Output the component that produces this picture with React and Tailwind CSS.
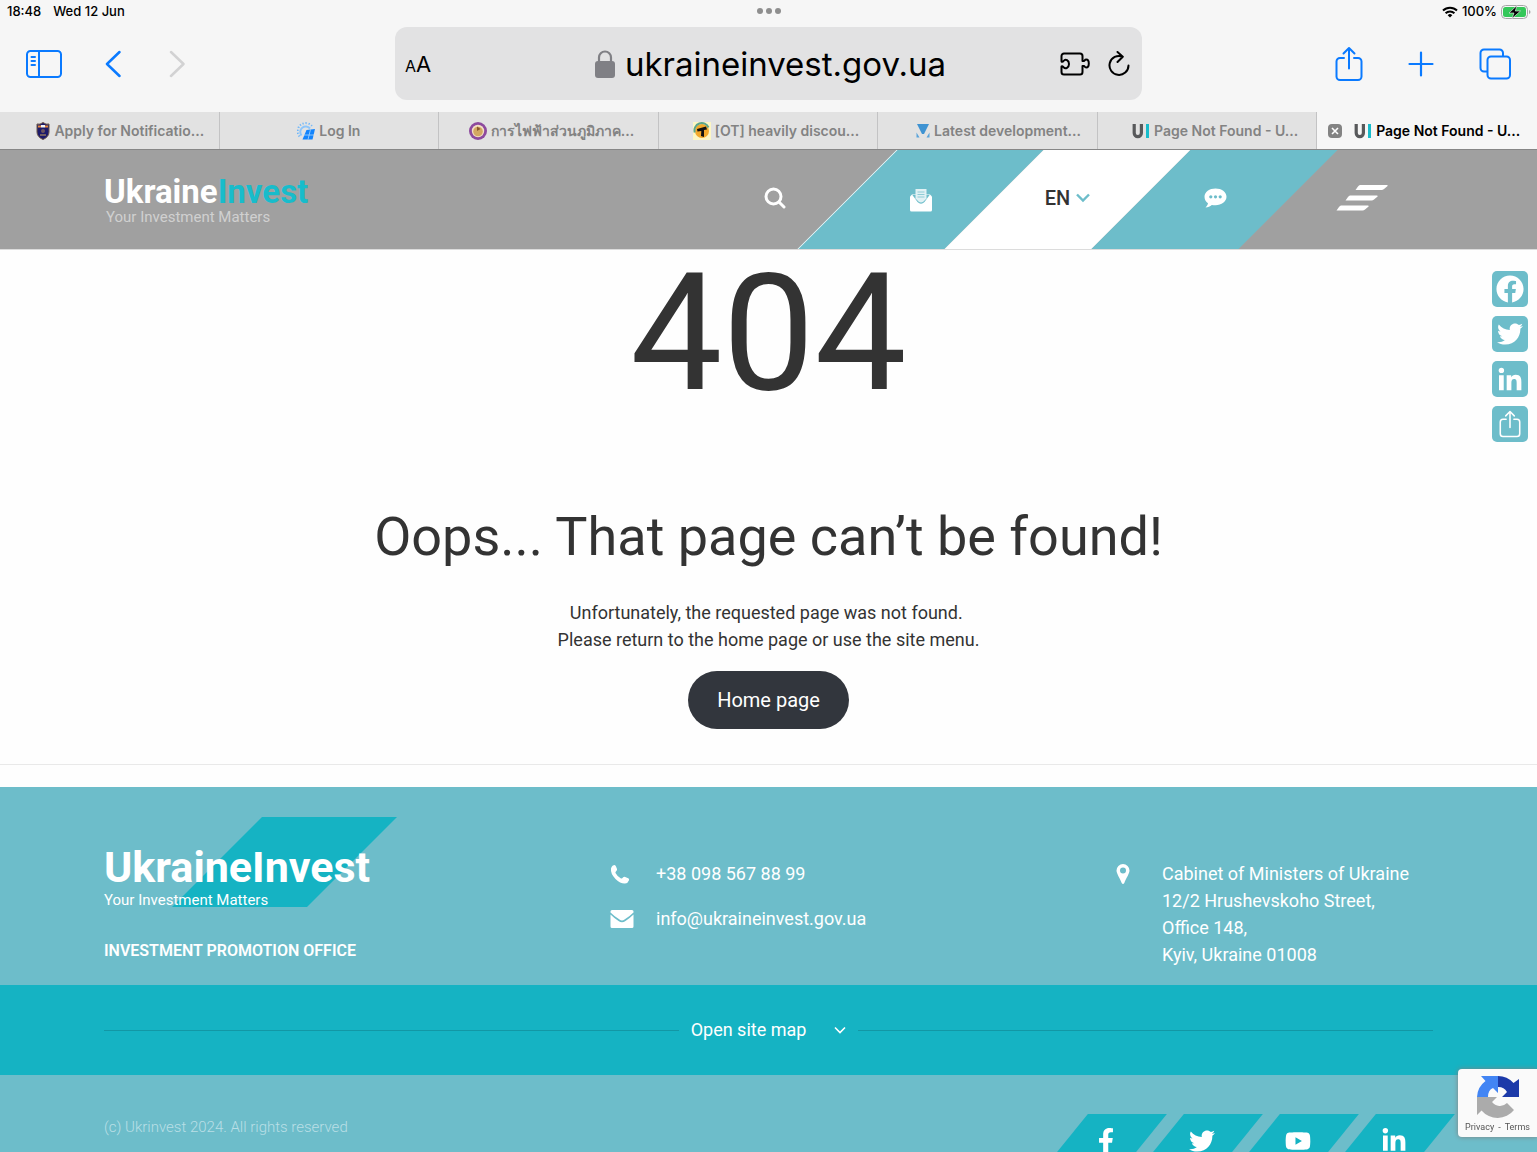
import { FaFacebook, FaFacebookF, FaLinkedinIn, FaTwitter, FaYoutube } from "react-icons/fa";

function ShareIcon({ className }) {
  return (
    <svg viewBox="0 0 28 36" className={className} fill="none" stroke="currentColor" strokeWidth="2" strokeLinecap="round" strokeLinejoin="round">
      <path d="M9 12H5a3.500 3.500 0 0 0-3.500 3.500v15A3.500 3.500 0 0 0 5 34h18a3.500 3.500 0 0 0 3.500-3.500v-15A3.500 3.500 0 0 0 23 12h-4" />
      <path d="M14 22.500V2M8.500 7.500 14 2l5.500 5.500" />
    </svg>
  );
}

function LinkedinMark() {
  return (
    <svg viewBox="0 0 32 32" className="size-9" fill="currentColor">
      <path d="M6.227 12.61h4.190v13.480h-4.190zm2.095-6.700a2.430 2.430 0 0 1 0 4.860c-1.344 0-2.428-1.090-2.428-2.430s1.084-2.430 2.428-2.430m4.720 6.700h4.020v1.840h.058c.56-1.058 1.927-2.176 3.965-2.176 4.238 0 5.020 2.792 5.020 6.420v7.395h-4.183v-6.560c0-1.564-.03-3.574-2.178-3.574-2.180 0-2.514 1.700-2.514 3.460v6.668h-4.187z" />
    </svg>
  );
}

function ShieldIcon() {
  return (
    <svg viewBox="0 0 14 18" className="h-[18px] w-3.5">
      <path d="M1 2Q4 3 7 .5 10 3 13 2v8q0 5-6 7.500Q1 15 1 10Z" fill="#1d1a6b" stroke="#6b5648" strokeWidth="1" />
      <path d="M2 3.500h3v2H2zM9 3.500h3v2H9z" fill="#e98a3c" />
      <path d="M5 3h4v2.500H5z" fill="#f4f4f4" />
      <circle cx="7" cy="9" r="2" fill="#6d5560" />
      <path d="M4 13h6" stroke="#c9a35c" />
    </svg>
  );
}

function SolarIcon() {
  return (
    <svg viewBox="0 0 18 18" className="size-[18px]">
      <path d="M4.500 13.500A5 5 0 0 1 13 6.500" fill="none" stroke="#8cc5fa" strokeWidth="2" />
      <path d="M2.500 14.500A7.500 7.500 0 0 1 15 4" fill="none" stroke="#6db6fa" strokeWidth="2" strokeDasharray="1.200 1.800" />
      <path d="M9.500 8 18 7 15.500 17.500H5.500Z" fill="#1284fd" />
      <path d="m13.500 7.500-2.500 10M7 13h10" stroke="#bfdffb" strokeWidth=".7" />
    </svg>
  );
}

function PeaIcon() {
  return (
    <svg viewBox="0 0 18 18" className="size-[18px]">
      <circle cx="9" cy="9" r="9" fill="#8d4a9e" />
      <circle cx="9" cy="9" r="6.200" fill="#f3dfc4" />
      <circle cx="9" cy="9.500" r="4.800" fill="#d3a862" />
      <path d="m8 4.500 3.500 2.500L8 9Z" fill="#8a5a2c" />
    </svg>
  );
}

function OtIcon() {
  return (
    <svg viewBox="0 0 18 18" className="size-[18px]">
      <path d="M0 0h18v18H0z" fill="#fcf6c4" />
      <circle cx="9" cy="9" r="7" fill="#f3a92c" />
      <path d="M1.800 10.500A7.300 7.300 0 0 1 15.500 5.500" fill="none" stroke="#5ba58c" strokeWidth="2" />
      <path d="m4 7 9-2.500 1 3-3 .5v7l-3-1 .3-5-3.800.5Z" fill="#111" />
    </svg>
  );
}

function VoxIcon() {
  return (
    <svg viewBox="0 0 14 14" className="size-3.5">
      <path d="M1 0h12L8 10H6Z" fill="#3f93d2" />
      <path d="M.5 8.500v5H3.500ZM13.500 8.500v5h-3Z" fill="#5aa3da" />
    </svg>
  );
}

function UiIcon() {
  return (
    <svg viewBox="0 0 18 16" className="h-4 w-[18px]" fill="none">
      <path d="M2.200 1v9a3.600 3.600 0 0 0 7.200 0V1" stroke="#58595b" strokeWidth="3.200" />
      <path d="M15.500 1v14" stroke="#18bccb" strokeWidth="3" />
    </svg>
  );
}

const tabs = [
  { title: "Apply for Notificatio...", Icon: ShieldIcon, pad: "pl-[22px]" },
  { title: "Log In", Icon: SolarIcon, pad: "" },
  { title: "การไฟฟ้าส่วนภูมิภาค...", Icon: PeaIcon, pad: "pl-1.5" },
  { title: "[OT] heavily discou...", Icon: OtIcon, pad: "pl-4" },
  { title: "Latest development...", Icon: VoxIcon, pad: "pl-[22px]" },
  { title: "Page Not Found - U...", Icon: UiIcon, pad: "pl-4" },
];

function StatusBar() {
  return (
    <div className="relative flex h-[22px] items-center justify-between pt-0.5 pr-1.5 pl-[7px] text-[13px] font-medium text-black">
      <div className="flex gap-3">
        <span>18:48</span>
        <span>Wed 12 Jun</span>
      </div>
      <div className="absolute inset-x-0 top-2 flex justify-center gap-[3px]">
        <i className="size-1.5 rounded-full bg-[#8e8e8e]" />
        <i className="size-1.5 rounded-full bg-[#8e8e8e]" />
        <i className="size-1.5 rounded-full bg-[#8e8e8e]" />
      </div>
      <div className="flex items-center gap-1">
        <svg viewBox="0 0 16 12" className="h-3 w-4" fill="none" stroke="#000" strokeWidth="2">
          <path d="M1 4.500a10 10 0 0 1 14 0M3.600 7.300a6.200 6.200 0 0 1 8.800 0" />
          <path d="M8 11.500 5.700 9.200a3.300 3.300 0 0 1 4.600 0Z" fill="#000" stroke="none" />
        </svg>
        <span>100%</span>
        <svg viewBox="0 0 30 14" className="h-3.5 w-[30px]">
          <rect x=".5" y=".5" width="26" height="13" rx="4" fill="none" stroke="#a5a5a5" />
          <rect x="2" y="2" width="23" height="10" rx="2.500" fill="#34c759" />
          <path d="M28 5v4q1.500-.5 1.500-2T28 5Z" fill="#a5a5a5" />
          <path d="M16 .5 8 8h5l-2 5.500L19.500 6h-5.200Z" fill="#000" stroke="#f6f6f6" strokeWidth=".6" />
        </svg>
      </div>
    </div>
  );
}

function Toolbar() {
  return (
    <div className="flex items-center justify-between px-[26px] pt-[5px] pb-3 text-[#0a7aff]">
      <div className="flex flex-1 items-center">
        <button aria-label="Sidebar">
          <svg viewBox="0 0 36 28" className="h-7 w-9" fill="none" stroke="currentColor" strokeWidth="2" strokeLinecap="round">
            <rect x="1" y="1" width="34" height="26" rx="3.500" />
            <path d="M13 1v26M5.500 7h3.500M5.500 11h3.500M5.500 15h3.500" />
          </svg>
        </button>
        <button aria-label="Back" className="ml-[43px]">
          <svg viewBox="0 0 16 28" className="h-7 w-4" fill="none" stroke="currentColor" strokeWidth="2.500" strokeLinecap="round" strokeLinejoin="round">
            <path d="M14.500 2 2 14l12.500 12" />
          </svg>
        </button>
        <button aria-label="Forward" className="ml-12 text-[#d2d2d3]">
          <svg viewBox="0 0 16 28" className="h-7 w-4" fill="none" stroke="currentColor" strokeWidth="2.500" strokeLinecap="round" strokeLinejoin="round">
            <path d="M2 2l12.500 12L2 26" />
          </svg>
        </button>
      </div>

      <div className="relative flex h-[73px] w-[747px] items-center justify-center rounded-xl bg-[#e2e2e3] pl-1 text-black">
        <button aria-label="Text size" className="absolute left-[10px] pt-0.5 text-[22px]">
          <span className="text-base">A</span>A
        </button>
        <svg viewBox="0 0 20 28" className="h-7 w-5">
          <rect y="11" width="20" height="17" rx="3" fill="#808085" />
          <path d="M4 12V7.500a6 6 0 0 1 12 0V12" fill="none" stroke="#808085" strokeWidth="2.200" />
        </svg>
        <span className="ml-2.5 text-[33px] leading-[42px]">ukraineinvest.gov.ua</span>
        <div className="absolute right-3 flex items-center gap-[18px]">
          <button aria-label="Extensions">
            <svg viewBox="0 0 30 24" className="h-6 w-[30px]" fill="none" stroke="#000" strokeWidth="2" strokeLinejoin="round">
              <path d="M1.500 4A2.500 2.500 0 0 1 4 1.500h16A2.500 2.500 0 0 1 22.500 4v5h1.500c.7 0 .6-1.500 2.200-1.500 1.500 0 2.600 1.700 2.600 4s-1.100 4-2.600 4c-1.600 0-1.500-1.500-2.200-1.500h-1.500v6a2.500 2.500 0 0 1-2.500 2.500H4A2.500 2.500 0 0 1 1.500 20v-5c0-1.300 1.300-.9 2 .1 2 2.400 5.500.5 5.500-3.100S5.500 6.500 3.500 9c-.7 1-2 1.300-2 0Z" />
            </svg>
          </button>
          <button aria-label="Reload">
            <svg viewBox="0 0 22 26" className="h-[26px] w-[22px]" fill="none" stroke="#000" strokeWidth="2" strokeLinecap="round" strokeLinejoin="round">
              <path d="M14.500 5.600A9.500 9.500 0 1 0 20.500 14.500M9.500 1l5.300 4.700L9.500 11" />
            </svg>
          </button>
        </div>
      </div>

      <div className="flex flex-1 items-center justify-end">
        <button aria-label="Share">
          <ShareIcon className="h-9 w-7" />
        </button>
        <button aria-label="New tab" className="ml-[45px]">
          <svg viewBox="0 0 26 26" className="size-[26px]" stroke="currentColor" strokeWidth="2.200" strokeLinecap="round">
            <path d="M13 1.500v23M1.500 13h23" />
          </svg>
        </button>
        <button aria-label="Tabs" className="ml-[45px]">
          <svg viewBox="0 0 32 32" className="size-8" fill="none" stroke="currentColor" strokeWidth="2">
            <path d="M8.500 23.500H5A3.500 3.500 0 0 1 1.500 20V5A3.500 3.500 0 0 1 5 1.500h15.500A3.500 3.500 0 0 1 24 5v3.500" />
            <rect x="8.500" y="8.500" width="22.500" height="22" rx="3.500" />
          </svg>
        </button>
      </div>
    </div>
  );
}

function TabBar() {
  return (
    <nav className="grid h-[38px] grid-cols-7 border-b border-[#868686] text-sm font-semibold text-[#838383]">
      {tabs.map(({ title, Icon, pad }) => (
        <button
          key={title}
          className={`flex items-center justify-center gap-1 border-r border-[#c3c3c4] bg-[#e2e2e2] whitespace-nowrap ${pad}`}
        >
          <Icon />
          {title}
        </button>
      ))}
      <div className="flex items-center justify-center gap-1 pr-1.5 whitespace-nowrap text-black">
        <button aria-label="Close tab" className="mr-2 rounded-sm bg-[#838383] text-white">
          <svg viewBox="0 0 14 14" className="size-3.5" stroke="currentColor" strokeWidth="1.600">
            <path d="m4 4 6 6M10 4l-6 6" />
          </svg>
        </button>
        <UiIcon />
        <span>Page Not Found - U...</span>
      </div>
    </nav>
  );
}

function Stripe({ color, label, children }) {
  return (
    <div className="relative h-full w-[147px]">
      <span className={`absolute inset-0 -skew-x-45 ${color}`} />
      <button aria-label={label} className="relative flex h-full w-full items-center justify-center pb-[3px]">
        {children}
      </button>
    </div>
  );
}

function SiteHeader() {
  return (
    <header className="flex h-[100px] items-center justify-between overflow-hidden border-b border-[#dcdcdc] bg-[#a0a0a0] pr-[102px] pl-[104px]">
      <a href="#" className="block pt-0.5">
        <span className="block text-[33px] leading-[33px] font-bold text-white">
          Ukraine<span className="text-[#18bccb]">Invest</span>
        </span>
        <span className="block pl-0.5 text-[15px] leading-[18px] text-[#d0d0d0]">Your Investment Matters</span>
      </a>
      <div className="flex h-full">
        <Stripe color="bg-transparent" label="Search">
          <svg viewBox="0 0 22 22" className="ml-0.5 size-[22px]" fill="none" stroke="#fff" strokeWidth="3" strokeLinecap="round">
            <circle cx="9.500" cy="9.500" r="7.500" />
            <path d="m15 15 5 5" />
          </svg>
        </Stripe>
        <Stripe color="bg-[#6dbdca] border-l border-white" label="Subscribe">
          <svg viewBox="0 0 24 24" className="mt-1 size-6">
            <path d="M1 8.500 3.500 6h17L23 8.500V22q0 1.500-1.500 1.500h-19Q1 23.500 1 22Z" fill="#fff" />
            <path d="M3 6.500h18L15.500 14q-3.500 3.500-7 0Z" fill="#6dbdca" />
            <path d="M6.500 1h11v9.500l-3 3q-2.500 2-5 0l-3-3Z" fill="#e0f1f4" />
            <path d="M8.500 4h7M8.500 6.500h7M8.500 9h7" stroke="#8fccd6" strokeWidth="1" />
          </svg>
        </Stripe>
        <Stripe color="bg-white" label="Language">
          <span className="text-xl font-medium text-[#333]">EN</span>
          <svg viewBox="0 0 14 10" className="ml-1.5 h-2.5 w-3.5" fill="none" stroke="#6dbdca" strokeWidth="2.400">
            <path d="m1 1.500 6 6 6-6" />
          </svg>
        </Stripe>
        <Stripe color="bg-[#6dbdca]" label="Chat">
          <svg viewBox="0 0 24 20" className="h-5 w-6">
            <path d="M12.500.5C6.500.5 1.500 4 1.500 8.800c0 2.700 1.300 5 3.500 6.500-.3 1.700-1.200 3-2.500 4.200 2.400-.1 4.600-1 6.300-2.500 1.200.2 2.400.3 3.700.3 6 0 11-3.700 11-8.500S18.500.5 12.500.5Z" fill="#fff" />
            <circle cx="7.800" cy="8.800" r="1.600" fill="#6dbdca" />
            <circle cx="12.500" cy="8.800" r="1.600" fill="#6dbdca" />
            <circle cx="17.200" cy="8.800" r="1.600" fill="#6dbdca" />
          </svg>
        </Stripe>
        <Stripe color="bg-transparent" label="Menu">
          <svg viewBox="0 0 52 26" className="h-[26px] w-[52px]" fill="#fff">
            <path d="M24 0h27q1.500 0 0 1.500L48 4q-1 1-2.500 1H19.500L22 1.500Q23 0 24 0ZM14 10.500h27q1.500 0 0 1.500l-3 2.500q-1 1-2.500 1H9.500L12 12q1-1.500 2-1.500ZM5 20.500h27q1.500 0 0 1.500l-3 2.500q-1 1-2.500 1H.5L3 22q1-1.500 2-1.500Z" />
          </svg>
        </Stripe>
      </div>
    </header>
  );
}

function ShareRail() {
  const box = "flex size-9 items-center justify-center rounded-[5px] bg-[#6dbdca] text-white";
  return (
    <div className="fixed top-[271px] right-[9px] flex flex-col gap-[9px]">
      <a href="#" aria-label="Facebook" className={box}><FaFacebook className="size-7" /></a>
      <a href="#" aria-label="Twitter" className={box}><FaTwitter className="size-[26px]" /></a>
      <a href="#" aria-label="LinkedIn" className={box}><LinkedinMark /></a>
      <a href="#" aria-label="Share" className={box}><ShareIcon className="h-7 w-[22px]" /></a>
    </div>
  );
}

const socials = [
  { label: "Facebook", Icon: FaFacebookF },
  { label: "Twitter", Icon: FaTwitter },
  { label: "YouTube", Icon: FaYoutube },
  { label: "LinkedIn", Icon: FaLinkedinIn },
];

function Footer() {
  return (
    <footer className="bg-[#6dbdca] text-white">
      <div className="grid grid-cols-3 gap-[189px] px-[104px] pt-[59px] pb-[17px]">
        <div className="relative">
          <span className="absolute -top-[29px] left-[113px] h-[90px] w-[135px] -skew-x-45 bg-[#15b3c3]" />
          <div className="relative whitespace-nowrap">
            <p className="text-[43px] leading-[43px] font-bold">UkraineInvest</p>
            <p className="mt-0.5 text-[15px] leading-[18px]">Your Investment Matters</p>
            <p className="mt-[33px] text-base leading-[18px] font-semibold">INVESTMENT PROMOTION OFFICE</p>
          </div>
        </div>

        <div className="flex flex-col gap-[18px] pt-3.5 text-lg leading-[27px]">
          <a href="#" className="flex items-center">
            <svg viewBox="0 0 24 20" className="h-5 w-6" fill="#fff">
              <path d="M1 4.500C1.500 2 3.500 1 4.500 1q1 0 1.500 1.500l1 2.500q.3 1-.5 1.800-1.500 1.200-1 2.200 1.800 3.500 5.500 5.500 1 .3 2.200-1.200.8-.9 2-.4l3 1.300q1.300.7.8 2-1 3-4 3.300-4.500.3-9.500-4.500Q.300 9.500 1 4.500Z" />
            </svg>
            <span className="ml-[22px]">+38 098 567 88 99</span>
          </a>
          <a href="#" className="flex items-center">
            <svg viewBox="0 0 24 18" className="h-[18px] w-6" fill="#fff">
              <path d="M2 0h20q1.500 0 1.500 1.500v1Q20 6 14.500 9.500q-2.500 2-5 0Q4 6 .5 2.500v-1Q.5 0 2 0Z" />
              <path d="M.5 4.500Q4 8 8.500 11q3.500 2.500 7 0Q20 8 23.500 4.500v12Q23.500 18 22 18H2Q.5 18 .5 16.500Z" />
            </svg>
            <span className="ml-[22px]">info@ukraineinvest.gov.ua</span>
          </a>
        </div>

        <div className="flex pt-3.5 text-lg leading-[27px] whitespace-nowrap">
          <svg viewBox="0 0 14 20" className="mt-1 h-5 w-3.5" fill="#fff">
            <path fillRule="evenodd" d="M7 0a6.500 6.500 0 0 1 6.500 6.500c0 3-3.500 8-5.200 12.500q-1.300 2-2.600 0C4 14.500.5 9.500.5 6.500A6.500 6.500 0 0 1 7 0Zm0 3.500a3 3 0 1 0 0 6 3 3 0 0 0 0-6Z" />
          </svg>
          <address className="ml-8 not-italic">
            Cabinet of Ministers of Ukraine
            <br />
            12/2 Hrushevskoho Street,
            <br />
            Office 148,
            <br />
            Kyiv, Ukraine 01008
          </address>
        </div>
      </div>

      <div className="flex h-[90px] items-center gap-3 bg-[#15b3c3] px-[104px]">
        <span className="h-px flex-1 bg-[#1297a5]" />
        <button className="flex items-center text-lg">
          Open site map
          <svg viewBox="0 0 12 8" className="ml-7 h-2 w-3" fill="none" stroke="currentColor" strokeWidth="1.600">
            <path d="m1 1.500 5 5 5-5" />
          </svg>
        </button>
        <span className="h-px flex-1 bg-[#1297a5]" />
      </div>

      <div className="flex justify-between px-[104px] pt-[39px]">
        <p className="text-[15px] leading-[26px] font-light text-[#b9dfe6]">(c) Ukrinvest 2024. All rights reserved</p>
        <div className="flex gap-[17px]">
          {socials.map(({ label, Icon }) => (
            <a key={label} href="#" aria-label={label} className="relative flex h-[54px] w-[79px] items-center justify-center">
              <span className="absolute inset-0 skew-x-[-39deg] bg-[#15b3c3]" />
              <Icon className="relative size-[26px]" />
            </a>
          ))}
        </div>
      </div>
    </footer>
  );
}

function Recaptcha() {
  return (
    <div className="fixed right-0 bottom-[15px] flex h-[68px] w-[79px] flex-col items-center rounded-l-sm bg-[#fafafa] pt-1.5 text-[#555] shadow-[0_0_5px_gray]">
      <svg viewBox="0 0 44 44" className="size-11">
        <path d="M22 1a21 21 0 0 1 15.500 7L43 4v18H26l5-5a10 10 0 0 0-9-5Z" fill="#1c3aa9" />
        <path d="M22 1H5l4.500 5A21 21 0 0 0 1 22h11q0-7 5-9l5 5Z" fill="#4285f4" />
        <path d="M1 22v18l4.500-4.500A21 21 0 0 0 38 35l-7-7a10 10 0 0 1-15-1l5-5Z" fill="#ababab" />
      </svg>
      <p className="flex gap-1 pt-0.5 text-[9px] leading-3">
        <a href="#">Privacy</a>
        <span>-</span>
        <a href="#">Terms</a>
      </p>
    </div>
  );
}

export default function App() {
  return (
    <div className="h-screen overflow-hidden bg-[#fefefe] font-[Roboto,sans-serif] text-[#333]">
      <div className="bg-[#f6f6f6] font-[Inter,'Noto_Sans',sans-serif]">
        <StatusBar />
        <Toolbar />
        <TabBar />
      </div>
      <SiteHeader />
      <main className="mb-[22px] flex flex-col items-center border-b border-[#e9e9e9] pb-[35px] text-center">
        <h1 className="text-[164px] leading-[166px]">404</h1>
        <h2 className="mt-[89px] text-[54px] leading-[64px]">Oops... That page can’t be found!</h2>
        <p className="mt-[30px] text-lg leading-[27px]">
          Unfortunately, the requested page was not found.&nbsp;
          <br />
          Please return to the home page or use the site menu.
        </p>
        <a href="#" className="mt-[18px] rounded-full bg-[#32363d] px-[29px] text-xl leading-[58px] text-white">
          Home page
        </a>
      </main>
      <Footer />
      <ShareRail />
      <Recaptcha />
    </div>
  );
}
